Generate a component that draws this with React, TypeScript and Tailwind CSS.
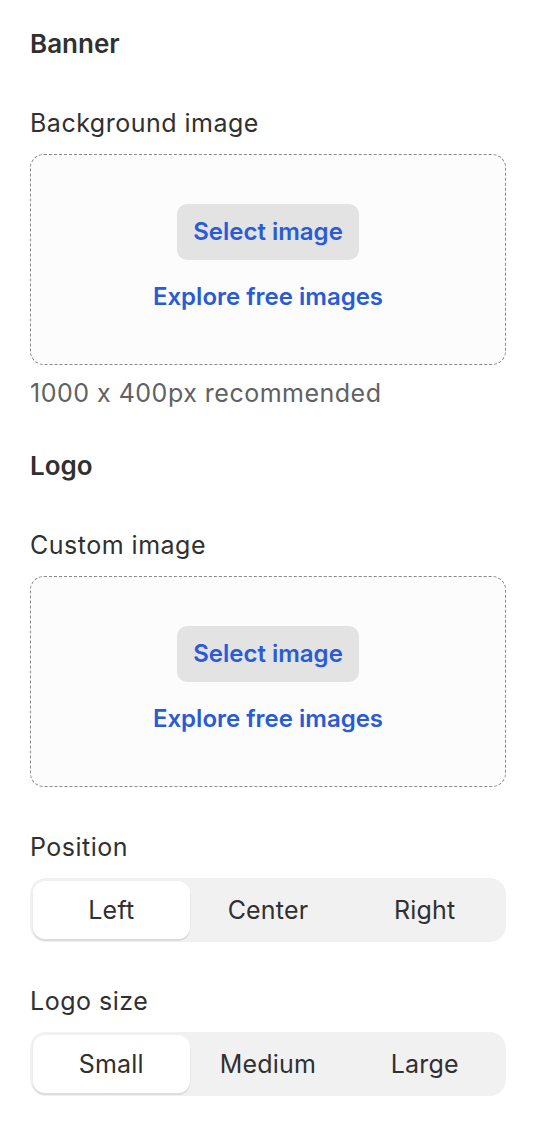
import React from "react";

function DropZone() {
  return (
    <div className="flex flex-col items-center rounded-[14px] border border-dashed border-[#8a8a8a] bg-[#fcfcfc] pt-[49px] pb-[51px]">
      <button className="h-[56px] rounded-[10px] bg-[#e3e3e3] px-[16px] text-[24px] font-semibold leading-[32px] text-[#2a5bd7]">
        Select image
      </button>
      <div className="mt-[21px] text-[24px] font-semibold leading-[32px] text-[#2a5bd7]">
        Explore free images
      </div>
    </div>
  );
}

function Segmented({ items }: { items: string[] }) {
  return (
    <div className="grid h-[64px] grid-cols-3 rounded-[16px] bg-[#f1f1f1] p-[3px]">
      {items.map((it, i) => (
        <div
          key={it}
          className={
            i === 0
              ? "flex items-center justify-center rounded-[12px] bg-white text-[25px] leading-[32px] tracking-[0.2px] text-[#303030] shadow-[0_2px_0_0_#dcdcdc,0_1px_2px_rgba(0,0,0,0.08)]"
              : "flex items-center justify-center text-[25px] leading-[32px] tracking-[0.2px] text-[#303030]"
          }
        >
          {it}
        </div>
      ))}
    </div>
  );
}

export default function App() {
  return (
    <div
      className="min-h-[1132px] w-[538px] bg-white pl-[30px] pr-[32px] pt-[28px] text-[#303030] [font-feature-settings:'calt'_0]"
      style={{ fontFamily: "Inter, 'Noto Sans', sans-serif" }}
    >
      <div className="text-[26px] font-semibold leading-[32px]">Banner</div>
      <div className="mt-[47px] text-[25px] leading-[32px] tracking-[0.5px]">Background image</div>
      <div className="mt-[15px]">
        <DropZone />
      </div>
      <div className="mt-[12px] text-[25px] leading-[32px] tracking-[0.5px] text-[#616161]">1000 x 400px recommended</div>
      <div className="mt-[41px] text-[26px] font-semibold leading-[32px]">Logo</div>
      <div className="mt-[47px] text-[25px] leading-[32px] tracking-[0.5px]">Custom image</div>
      <div className="mt-[15px]">
        <DropZone />
      </div>
      <div className="mt-[44px] text-[25px] leading-[32px] tracking-[0.5px]">Position</div>
      <div className="mt-[15px]">
        <Segmented items={["Left", "Center", "Right"]} />
      </div>
      <div className="mt-[43px] text-[25px] leading-[32px] tracking-[0.5px]">Logo size</div>
      <div className="mt-[15px]">
        <Segmented items={["Small", "Medium", "Large"]} />
      </div>
    </div>
  );
}
